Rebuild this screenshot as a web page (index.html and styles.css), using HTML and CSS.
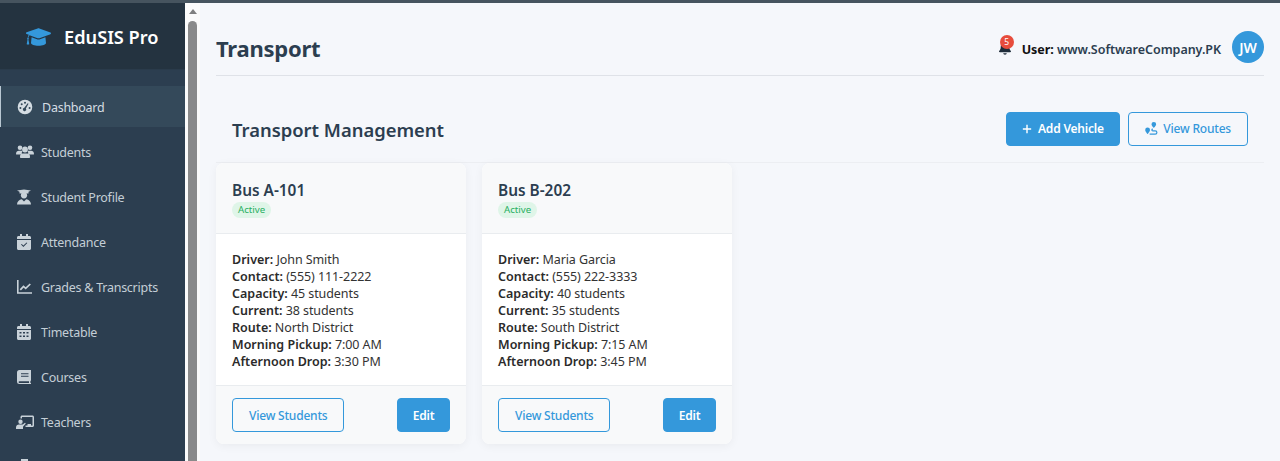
FILE: index.html
```html
<!DOCTYPE html>
<html lang="en">
<head>
<meta charset="utf-8">
<title>Transport</title>
<link rel="stylesheet" href="styles.css">
</head>
<body>
<div class="topline"></div>
<div class="app">
  <aside class="sidebar">
    <div class="brand">
      <svg class="brand-icon" viewBox="0 0 640 512"><path fill="#3498db" d="M320 32c-8 0-16 1-23 4L15 137C6 140 0 149 0 158s6 18 15 21l58 21c-16 21-27 46-30 73-9 5-13 13-13 23 0 9 4 17 10 22L18 437c-2 8 3 11 9 11h47c6 0 11-3 9-11L61 318c6-5 10-13 10-22 0-9-4-17-12-22 3-24 14-46 31-63l207 74c7 3 15 4 23 4s16-1 23-4l282-101c9-3 15-12 15-21s-6-18-15-21L343 36c-7-3-15-4-23-4zM128 408c0 35 86 72 192 72s192-37 192-72l-15-145-154 55c-7 3-15 4-23 4s-16-1-23-4l-154-55z"/></svg>
      <span class="brand-name">EduSIS Pro</span>
    </div>
    <nav class="nav">
      <a class="nav-item active"><svg viewBox="0 0 18 16"><path fill="#d5dde3" fill-rule="evenodd" d="M8 .7a7.300 7.300 0 1 1 0 14.600A7.300 7.300 0 0 1 8 .7zM8 2.800a1 1 0 1 0 0 2 1 1 0 0 0 0-2zM4.700 4.300a1 1 0 1 0 0 2 1 1 0 0 0 0-2zM3.400 8a1 1 0 1 0 0 2 1 1 0 0 0 0-2zM12.600 8a1 1 0 1 0 0 2 1 1 0 0 0 0-2zM10.700 4.300L7.300 8.700a1.700 1.700 0 1 0 1.600.7l2.600-4.600z"/></svg><span>Dashboard</span></a>
      <a class="nav-item"><svg viewBox="0 0 18 16"><g fill="#c9d2d9"><circle cx="4" cy="3.800" r="2.300"/><circle cx="14" cy="3.800" r="2.300"/><circle cx="9" cy="5.500" r="2.900"/><path d="M0 10c0-2 1.300-3.200 3-3.200h2.200c.5 0 .9.100 1.200.3a4.200 4.200 0 0 0-.5 3.400H.8C.3 10.500 0 10.400 0 10z"/><path d="M12.100 10.500a4.200 4.200 0 0 0-.5-3.400c.3-.2.700-.3 1.200-.3H15c1.700 0 3 1.200 3 3.200 0 .4-.3.500-.8.500z"/><path d="M6.700 9.500h4.600c1.500 0 2.700 1.200 2.700 2.700v1c0 .4-.3.800-.8.800H4.800c-.5 0-.8-.4-.8-.8v-1c0-1.500 1.200-2.700 2.700-2.700z"/></g></svg><span>Students</span></a>
      <a class="nav-item"><svg viewBox="0 0 18 16"><g fill="#c9d2d9"><path d="M1 1.500L8 .5l7 1-2.500 1.200V4.600h-9V2.700z"/><circle cx="8" cy="6.300" r="3.100"/><path d="M1 15.500c0-3 2.200-5 4.800-5.300L8 12.500l2.200-2.300c2.600.3 4.800 2.300 4.800 5.300z"/></g></svg><span>Student Profile</span></a>
      <a class="nav-item"><svg viewBox="0 0 18 16"><path fill="#c9d2d9" fill-rule="evenodd" d="M4 0h2v2h4V0h2v2h1.500C14.300 2 15 2.700 15 3.500V5H1V3.500C1 2.700 1.700 2 2.500 2H4zM1 6h14v8.500c0 .8-.7 1.500-1.500 1.500h-11C1.700 16 1 15.300 1 14.500zM10.600 8.400L7.400 11.600 5.700 9.900 5 10.600l2.400 2.400 3.900-3.900z"/></svg><span>Attendance</span></a>
      <a class="nav-item"><svg viewBox="0 0 18 16"><path fill="none" stroke="#c9d2d9" stroke-width="1.600" d="M1.800 1V14H16"/><path fill="none" stroke="#c9d2d9" stroke-width="1.700" d="M4.300 10.800L7.500 7.400l2.200 1.900 4.600-4.300"/></svg><span>Grades &amp; Transcripts</span></a>
      <a class="nav-item"><svg viewBox="0 0 18 16"><path fill="#c9d2d9" fill-rule="evenodd" d="M4 0h2v2h4V0h2v2h1.500C14.300 2 15 2.700 15 3.500V5H1V3.500C1 2.700 1.700 2 2.500 2H4zM1 6h14v8.500c0 .8-.7 1.500-1.500 1.500h-11C1.700 16 1 15.300 1 14.500zM3.500 8v1.500h2V8zM7 8v1.500h2V8zM10.500 8v1.500h2V8zM3.500 11.500V13h2v-1.500zM7 11.500V13h2v-1.500zM10.500 11.500V13h2v-1.500z"/></svg><span>Timetable</span></a>
      <a class="nav-item"><svg viewBox="0 0 18 16"><path fill="#c9d2d9" fill-rule="evenodd" d="M3.500 1H15v10.500l-.6.500v2h.6v1H3.500A2.500 2.500 0 0 1 1 12.500v-9A2.500 2.500 0 0 1 3.500 1zM5 4.300v1h7.500v-1zM5 6.800v1h7.500v-1zM3.500 12.200a.9.900 0 0 0 0 1.800h9.500v-1.800z"/></svg><span>Courses</span></a>
      <a class="nav-item"><svg viewBox="0 0 18 16"><path fill="#c9d2d9" d="M6 1.500h10.500c.8 0 1.500.7 1.500 1.500v8.500c0 .8-.7 1.500-1.500 1.500H9.500v-1.500h2V10H15v1.500h1.500V3H6v1.500H4.500V3c0-.8.7-1.500 1.500-1.500zM4.500 5.500a2.200 2.200 0 1 1 0 4.400 2.200 2.200 0 0 1 0-4.400zM3 10.500h3.700L9 8.700l.8.900L7 12.700V15H0v-1.500c0-1.700 1.300-3 3-3z"/></svg><span>Teachers</span></a>
      <a class="nav-item"><svg viewBox="0 0 18 16"><path fill="#c9d2d9" d="M5 0h7v6H5z"/></svg></a>
    </nav>
  </aside>
  <div class="scrollbar">
    <div class="sb-arrow"></div>
    <div class="sb-thumb"></div>
  </div>
  <main class="main">
    <header class="page-head">
      <h1>Transport</h1>
      <div class="user-area">
        <div class="bell">
          <svg viewBox="0 0 448 512"><path fill="#1f2d3a" d="M224 0c-18 0-32 14-32 32v19C119 66 64 131 64 208v19c0 47-17 92-49 127l-7 8c-8 9-10 22-5 34s16 19 29 19h384c13 0 25-8 29-19s3-25-5-34l-7-8c-32-35-49-80-49-127v-19c0-77-55-142-128-157V32c0-18-14-32-32-32zm45 493c12-12 19-28 19-45H160c0 17 7 33 19 45s28 19 45 19 33-7 45-19z"/></svg>
          <span class="badge">5</span>
        </div>
        <div class="user-text"><b>User:</b> <span>www.SoftwareCompany.PK</span></div>
        <div class="avatar">JW</div>
      </div>
    </header>
    <section>
      <div class="section-head">
        <h2>Transport Management</h2>
        <div class="actions">
          <button class="btn primary add"><svg class="plus" viewBox="0 0 12 12"><path fill="none" stroke="#fff" stroke-width="1.700" d="M6 1v10M1 6h10"/></svg>Add Vehicle</button>
          <button class="btn outline"><svg class="route" viewBox="0 0 14 14"><path fill="#3498db" fill-rule="evenodd" d="M9.500 0a2.500 2.500 0 0 1 2.500 2.500C12 4 9.500 6.500 9.500 6.500S7 4 7 2.500A2.500 2.500 0 0 1 9.500 0zM2.800 6a2.600 2.600 0 0 1 2.600 2.600c0 1.600-2.600 4.400-2.600 4.400S.2 10.200.2 8.600A2.600 2.600 0 0 1 2.800 6z"/><path fill="none" stroke="#3498db" stroke-width="1.300" d="M5 13h6c2.400 0 2.400-3.500 0-3.500H8.500C7 9.500 7 7.700 8.500 7.700"/></svg>View Routes</button>
        </div>
      </div>
      <div class="cards">
        <article class="card">
          <div class="card-head">
            <h3>Bus A-101</h3>
            <span class="status">Active</span>
          </div>
          <div class="card-body">
            <p><b>Driver:</b> John Smith</p>
            <p><b>Contact:</b> (555) 111-2222</p>
            <p><b>Capacity:</b> 45 students</p>
            <p><b>Current:</b> 38 students</p>
            <p><b>Route:</b> North District</p>
            <p><b>Morning Pickup:</b> 7:00 AM</p>
            <p><b>Afternoon Drop:</b> 3:30 PM</p>
          </div>
          <div class="card-foot">
            <button class="btn outline">View Students</button>
            <button class="btn primary small">Edit</button>
          </div>
        </article>
        <article class="card">
          <div class="card-head">
            <h3>Bus B-202</h3>
            <span class="status">Active</span>
          </div>
          <div class="card-body">
            <p><b>Driver:</b> Maria Garcia</p>
            <p><b>Contact:</b> (555) 222-3333</p>
            <p><b>Capacity:</b> 40 students</p>
            <p><b>Current:</b> 35 students</p>
            <p><b>Route:</b> South District</p>
            <p><b>Morning Pickup:</b> 7:15 AM</p>
            <p><b>Afternoon Drop:</b> 3:45 PM</p>
          </div>
          <div class="card-foot">
            <button class="btn outline">View Students</button>
            <button class="btn primary small">Edit</button>
          </div>
        </article>
      </div>
    </section>
  </main>
</div>
</body>
</html>
```
FILE: styles.css
```css
* { box-sizing: border-box; }
html, body { margin: 0; height: 461px; overflow: hidden; }
body { font-family: "Noto Sans", "Open Sans", sans-serif; font-size: 12.5px; color: #2c3e50; background: #f5f7fb; }
.topline { height: 3px; background: #46545f; }
.app { display: flex; height: 458px; }
.sidebar { width: 185px; flex: none; background: #2c3e50; overflow: hidden; }
.brand { height: 67px; background: #243340; border-bottom: 1px solid #2a3b4b; display: flex; align-items: center; padding: 1px 0 0 26px; gap: 13px; }
.brand-icon { width: 25px; height: 20px; }
.brand-name { color: #fff; font-size: 18.2px; font-weight: 600; }
.nav { padding-top: 16px; display: flex; flex-direction: column; gap: 4px; }
.nav-item { height: 41px; display: flex; align-items: center; padding-left: 16px; color: #c4ced6; font-size: 12.5px; letter-spacing: -.25px; }
.nav-item svg { width: 18px; height: 16px; margin-right: 7px; flex: none; }
.nav-item span { margin-top: 2px; }
.nav-item.active { background: #34495a; border-left: 1px solid #b9c7d2; color: #d5dde3; }
.scrollbar { width: 15px; flex: none; background: #fbfbfb; position: relative; }
.sb-arrow { margin: 6px auto 0; width: 0; height: 0; border-left: 4.500px solid transparent; border-right: 4.500px solid transparent; border-bottom: 5px solid #808080; }
.sb-thumb { position: absolute; top: 18px; left: 3px; width: 9px; height: 440px; background: #8a8a8a; border-radius: 5px 5px 0 0; }
.main { flex: 1; padding: 0 16px; min-width: 0; }
.page-head { height: 73px; border-bottom: 1px solid #dfe2e8; display: flex; justify-content: space-between; align-items: center; padding-top: 16px; }
h1 { margin: 2px 0 0; font-size: 22px; font-weight: 700; letter-spacing: -.25px; color: #2c3e50; }
.user-area { display: flex; align-items: center; }
.bell { position: relative; width: 12px; height: 16px; margin-right: 11px; }
.bell svg { width: 12px; height: 14px; display: block; margin-top: 2px; }
.badge { position: absolute; left: 1px; top: -4px; width: 14px; height: 14px; border-radius: 50%; background: #e74c3c; color: #fff; font-size: 8.500px; text-align: center; line-height: 14px; }
.user-text { font-size: 12.5px; color: #2c3e50; font-weight: 600; letter-spacing: -.04px; margin-top: 4px; }
.user-text b { color: #111; font-weight: 700; }
.avatar { width: 32px; height: 32px; border-radius: 50%; background: #3498db; color: #fff; font-weight: 600; font-size: 14px; display: flex; align-items: center; justify-content: center; margin-left: 11px; }
.section-head { height: 87px; border-bottom: 1px solid #eceef2; display: flex; justify-content: space-between; align-items: center; padding: 19px 16px 0; }
h2 { margin: 2px 0 0; font-size: 18.4px; font-weight: 600; color: #2c3e50; }
.actions { display: flex; gap: 8px; }
.btn { font-family: inherit; font-size: 12px; height: 34px; border-radius: 4px; padding: 0 16px; font-weight: 600; letter-spacing: -.2px; display: inline-flex; align-items: center; justify-content: center; border: 1px solid #3498db; }
.btn.primary { background: #3498db; color: #fff; }
.btn.outline { background: transparent; color: #3498db; font-weight: 500; }
.btn.small { width: 53px; padding: 0; }
.btn.add { padding: 0 15.5px; }
.plus { width: 10px; height: 10px; margin-right: 6px; }
.route { width: 13px; height: 13px; margin-right: 5px; }
.cards { display: flex; gap: 16px; align-items: flex-start; }
.card { width: 250px; height: 281px; border-radius: 8px; background: #fff; box-shadow: 0 2px 10px rgba(0,0,0,.05); overflow: hidden; display: flex; flex-direction: column; }
.card-head { height: 71px; background: #f8f9fa; border-bottom: 1px solid #e9ecef; padding: 18px 16px 0; }
h3 { margin: 0; font-size: 15.4px; line-height: 20px; font-weight: 600; color: #2c3e50; }
.status { display: inline-block; height: 16px; line-height: 16px; padding: 0 6px; margin-top: 1px; border-radius: 8px; background: #dff5e8; color: #27ae60; font-size: 9.700px; vertical-align: top; }
.card-body { flex: 1; padding: 17px 16px 0; }
.card-body p { margin: 0; height: 17px; line-height: 17px; font-size: 12.5px; letter-spacing: -.08px; color: #333; }
.card-body b { font-weight: 600; letter-spacing: .02px; color: #2b2b2b; }
.card-foot { height: 59px; background: #f8f9fa; border-top: 1px solid #e9ecef; display: flex; justify-content: space-between; align-items: center; padding: 0 16px; }
```
